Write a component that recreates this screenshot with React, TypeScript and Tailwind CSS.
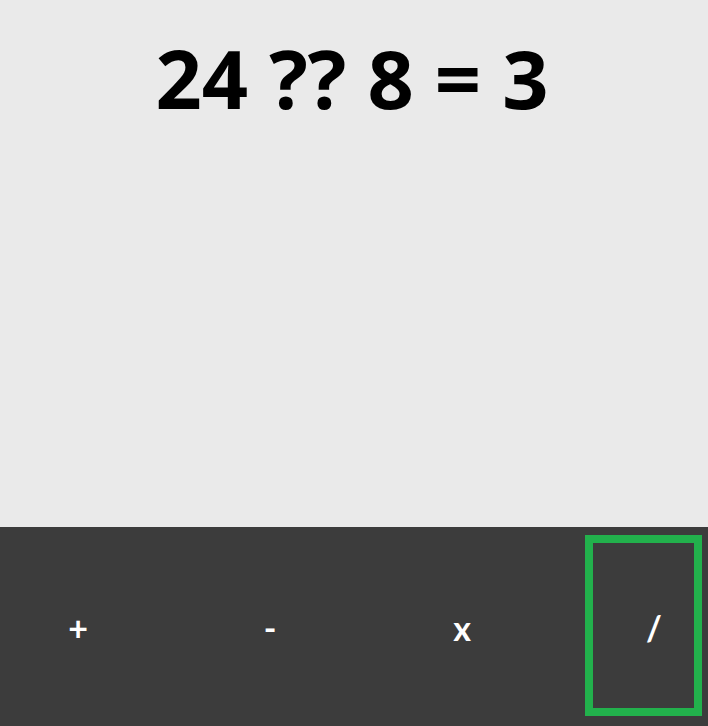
const ops = ['+', '-', 'x', '/']

export default function App() {
  const selected = 3
  return (
    <div className="h-screen flex flex-col bg-[#eaeaea] font-['Open_Sans',sans-serif]">
      <div className="flex-1 pt-[33px] pr-[4px]">
        <h1 className="text-center text-[81px] leading-[90px] font-bold text-black">24 ?? 8 = 3</h1>
      </div>
      <div className="h-[199px] bg-[#3c3c3c] flex gap-[75px] pl-[9px] pt-[8px] pb-[10px]">
        {ops.map((op, i) => (
          <button
            key={op}
            className={
              i === selected
                ? "w-[117px] h-full border-8 border-[#22b14c] pl-[21px] pt-[3px] text-white text-[34px] font-bold font-['Lato',sans-serif]"
                : "w-[117px] h-full border-8 border-transparent pl-[21px] pt-[3px] text-white text-[34px] font-bold font-['Lato',sans-serif]"
            }
          >
            {op}
          </button>
        ))}
      </div>
    </div>
  )
}
